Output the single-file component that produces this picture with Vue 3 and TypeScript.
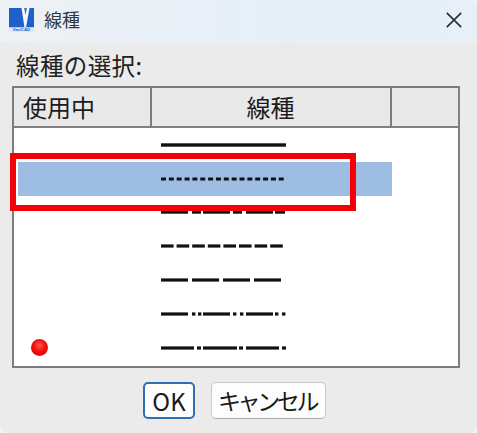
<script setup lang="ts">
type Seg = [number, number];
interface LineRow { segs: Seg[]; thick: number; used?: boolean; selected?: boolean }

function repeat(start: number, len: number, period: number, n: number): Seg[] {
  return Array.from({ length: n }, (_, i): Seg => [start + i * period, len]);
}

const rows: LineRow[] = [
  { segs: [[0, 125]], thick: 3.4 },
  { segs: repeat(0, 5, 7.85, 16), thick: 3, selected: true },
  {
    segs: [[0, 27], [31, 9], [42, 27], [72, 9], [85, 27], [114, 10]],
    thick: 3.4,
  },
  { segs: repeat(0, 12.6, 15.6, 8), thick: 3.2 },
  { segs: repeat(0, 27, 31, 4), thick: 3.2 },
  {
    segs: [[0, 27], [31, 3.4], [37, 3.4], [42, 27], [72, 3.4], [79, 3.4], [85, 27], [114, 3.4], [121, 3.4]],
    thick: 3.2,
  },
  {
    segs: [[0, 33], [36, 4], [42, 34], [78, 4], [85, 33], [121, 4]],
    thick: 3.2,
    used: true,
  },
];
</script>

<template>
  <div class="window">
    <header class="titlebar">
      <div class="logo">
        <svg width="25" height="24" viewBox="0 0 25 24" aria-hidden="true">
          <rect width="25" height="19.5" fill="#1f5fc9" />
          <path d="M12.5 0 H20.5 L17 19.5 H15.5 Z" fill="#f4f8fd" />
          <path d="M15 0 H18 L16.6 7 Z" fill="#3a78d4" />
          <rect y="19.5" width="25" height="4.5" fill="#dfe9f6" />
          <text x="12.5" y="23.2" text-anchor="middle" class="logo-text">VariCAD</text>
        </svg>
      </div>
      <span class="title">線種</span>
      <svg class="close" width="16" height="16" viewBox="0 0 16 16" aria-hidden="true">
        <path d="M0.8 0.8 L15.2 15.2 M15.2 0.8 L0.8 15.2" stroke="#26303a" stroke-width="1.7" fill="none" />
      </svg>
    </header>

    <main class="content">
      <div class="label">線種の選択:</div>
      <section class="table">
        <div class="thead">
          <div class="th first">使用中</div>
          <div class="th middle">線種</div>
          <div class="th last"></div>
        </div>
        <div class="tbody">
          <div v-for="(row, i) in rows" :key="i" class="row" :class="{ selected: row.selected }">
            <div class="cell-used">
              <span v-if="row.used" class="dot"></span>
            </div>
            <svg class="line" width="126" height="6" viewBox="0 0 126 6" aria-hidden="true">
              <rect
                v-for="(s, j) in row.segs"
                :key="j"
                :x="s[0]"
                :y="3 - row.thick / 2"
                :width="s[1]"
                :height="row.thick"
                fill="#111"
              />
            </svg>
          </div>
          <div class="marker"></div>
        </div>
      </section>
      <footer class="actions">
        <button class="btn primary" type="button">OK</button>
        <button class="btn cancel" type="button">キャンセル</button>
      </footer>
    </main>
  </div>
</template>

<style>
html, body { margin: 0; background: #f4f4f4; }
</style>

<style scoped>
.window {
  width: 477px;
  height: 433px;
  box-sizing: border-box;
  background: #ebebeb;
  border-radius: 8px;
  overflow: hidden;
  display: flex;
  flex-direction: column;
  font-family: "Noto Sans CJK JP", "Noto Sans", sans-serif;
  color: #1a1a1a;
}
.titlebar {
  height: 43px;
  flex: none;
  display: flex;
  align-items: center;
  padding: 0 15px 5px 9px;
  box-sizing: border-box;
  background: linear-gradient(90deg, #edf1f5 0%, #e6eff7 60%, #e8eff6 100%);
}
.logo { width: 25px; height: 24px; margin-top: 1px; }
.logo svg { display: block; }
.logo-text {
  font-family: "Liberation Sans", sans-serif;
  font-size: 4.4px;
  font-weight: 700;
  fill: #1f5fc9;
}
.title {
  margin-left: 10px;
  font-size: 18px;
  line-height: 24px;
  color: #33383d;
}
.close { margin-left: auto; margin-top: 1px; }
.content {
  flex: 1;
  display: flex;
  flex-direction: column;
  padding: 6px 17px 0 12px;
}
.label {
  height: 37px;
  padding-left: 4px;
  font-size: 23.5px;
  line-height: 33px;
  letter-spacing: 0.4px;
  color: #222;
}
.table {
  width: 448px;
  height: 282px;
  box-sizing: border-box;
  border: 2px solid #7c7c7c;
  border-right-color: #808080;
  background: #fff;
  display: flex;
  flex-direction: column;
}
.thead {
  height: 40px;
  flex: none;
  display: grid;
  grid-template-columns: 138px 240px 1fr;
  box-sizing: border-box;
  background: #e9e9e9;
  border-bottom: 2px solid #808080;
}
.th {
  font-size: 24px;
  line-height: 38px;
  color: #1c1c1c;
  box-sizing: border-box;
}
.first { padding-left: 9px; border-right: 2px solid #7c7c7c; }
.middle { text-align: center; border-right: 2px solid #7c7c7c; padding-right: 1px; }
.tbody { position: relative; flex: 1; padding-left: 4px; }
.row {
  width: 374px;
  height: 33.8px;
  display: flex;
  align-items: center;
}
.row.selected { background: #9dbde3; }
.cell-used {
  width: 143px;
  flex: none;
  display: flex;
  align-items: center;
  padding-left: 13px;
  box-sizing: border-box;
}
.dot {
  width: 17px;
  height: 17px;
  border-radius: 50%;
  background: radial-gradient(circle at 50% 38%, #ff5a50 0%, #f60c0c 45%, #d40000 100%);
}
.line { display: block; flex: none; }
.marker {
  position: absolute;
  left: -4px;
  top: 25px;
  width: 346px;
  height: 58px;
  box-sizing: border-box;
  border: 6px solid #f40008;
  pointer-events: none;
}
.actions {
  display: flex;
  justify-content: flex-start;
  gap: 16px;
  padding: 14px 0 0 131px;
}
.btn {
  height: 37px;
  padding: 0;
  box-sizing: border-box;
  background: #fdfdfd;
  border-radius: 5px;
  font-family: "Noto Sans CJK JP", "Noto Sans", sans-serif;
  line-height: 1;
  color: #1a1a1a;
}
.primary { width: 52px; border: 2px solid #2f6db5; font-size: 24px; }
.cancel {
  width: 115px;
  border: 1px solid #c9c9c9;
  border-bottom-color: #a8a8a8;
  font-size: 23px;
  letter-spacing: -3.4px;
  padding-right: 3px;
}
</style>
